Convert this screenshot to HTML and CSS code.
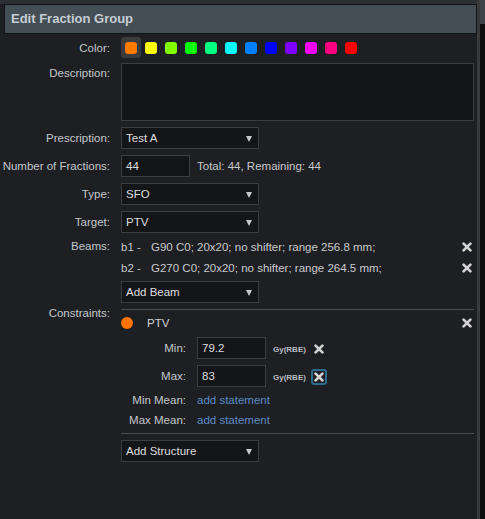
FILE: index.html
```html
<!DOCTYPE html>
<html>
<head>
<meta charset="utf-8">
<link rel="stylesheet" href="styles.css">
</head>
<body>
<div class="page">
  <div class="main">
    <div class="header">Edit Fraction Group</div>
    <div class="form">
      <div class="row row-color">
        <div class="lbl">Color:</div>
        <div class="ctl swatches">
          <span class="sw sel"><i style="background:#ff7b00"></i></span>
          <span class="sw"><i style="background:#ffff00"></i></span>
          <span class="sw"><i style="background:#80ff00"></i></span>
          <span class="sw"><i style="background:#00ff00"></i></span>
          <span class="sw"><i style="background:#00ff80"></i></span>
          <span class="sw"><i style="background:#00ffff"></i></span>
          <span class="sw"><i style="background:#0080ff"></i></span>
          <span class="sw"><i style="background:#0000ff"></i></span>
          <span class="sw"><i style="background:#8000ff"></i></span>
          <span class="sw"><i style="background:#ff00ff"></i></span>
          <span class="sw"><i style="background:#ff0080"></i></span>
          <span class="sw"><i style="background:#ff0000"></i></span>
        </div>
      </div>
      <div class="row row-desc">
        <div class="lbl lbl-top">Description:</div>
        <div class="ctl"><textarea class="desc"></textarea></div>
      </div>
      <div class="row">
        <div class="lbl">Prescription:</div>
        <div class="ctl"><div class="select">Test A<span class="arrow"></span></div></div>
      </div>
      <div class="row">
        <div class="lbl">Number of Fractions:</div>
        <div class="ctl inline"><div class="input">44</div><span class="total">Total: 44, Remaining: 44</span></div>
      </div>
      <div class="row">
        <div class="lbl">Type:</div>
        <div class="ctl"><div class="select">SFO<span class="arrow"></span></div></div>
      </div>
      <div class="row">
        <div class="lbl">Target:</div>
        <div class="ctl"><div class="select">PTV<span class="arrow"></span></div></div>
      </div>
      <div class="row row-beams">
        <div class="lbl lbl-beam">Beams:</div>
        <div class="ctl">
          <div class="beam"><span class="bid">b1 -</span><span class="btxt">G90 C0; 20x20; no shifter; range 256.8 mm;</span>
            <svg class="x" viewBox="0 0 10 10"><path d="M1.6 1.6L8.4 8.4M8.4 1.6L1.6 8.4"/></svg></div>
          <div class="beam"><span class="bid">b2 -</span><span class="btxt">G270 C0; 20x20; no shifter; range 264.5 mm;</span>
            <svg class="x" viewBox="0 0 10 10"><path d="M1.6 1.6L8.4 8.4M8.4 1.6L1.6 8.4"/></svg></div>
          <div class="select add-beam">Add Beam<span class="arrow"></span></div>
        </div>
      </div>
      <div class="row row-cons">
        <div class="lbl lbl-cons">Constraints:</div>
        <div class="ctl cons-ctl">
          <div class="cons-block">
            <div class="ptv">
              <span class="dot"></span><span class="ptv-name">PTV</span>
              <svg class="x x-right" viewBox="0 0 10 10"><path d="M1.6 1.6L8.4 8.4M8.4 1.6L1.6 8.4"/></svg>
            </div>
            <div class="crow">
              <div class="slbl">Min:</div>
              <div class="input small">79.2</div>
              <span class="unit">Gy(RBE)</span>
              <span class="xbox"><svg class="x" viewBox="0 0 10 10"><path d="M1.6 1.6L8.4 8.4M8.4 1.6L1.6 8.4"/></svg></span>
            </div>
            <div class="crow crow-max">
              <div class="slbl">Max:</div>
              <div class="input small">83</div>
              <span class="unit">Gy(RBE)</span>
              <span class="xbox focus"><svg class="x" viewBox="0 0 10 10"><path d="M1.6 1.6L8.4 8.4M8.4 1.6L1.6 8.4"/></svg></span>
            </div>
            <div class="mrow">
              <div class="slbl">Min Mean:</div>
              <span class="link">add statement</span>
            </div>
            <div class="mrow">
              <div class="slbl">Max Mean:</div>
              <span class="link">add statement</span>
            </div>
          </div>
          <div class="cons-end">
            <div class="select">Add Structure<span class="arrow"></span></div>
          </div>
        </div>
      </div>
    </div>
  </div>
  <div class="rail"></div>
  <div class="scroll"><div class="thumb"></div></div>
</div>
</body>
</html>
```
FILE: styles.css
```css
html, body {
  margin: 0;
  padding: 0;
  background: #1e1f22;
}
body {
  font-family: "Liberation Sans", Arial, sans-serif;
  font-size: 11.5px;
  color: #c3c7cb;
}
.page {
  display: flex;
  height: 519px;
  overflow: hidden;
}
.main {
  width: 477px;
  flex: none;
  border-top: 4px solid #2b3035;
  box-sizing: border-box;
}
.header {
  margin-left: 4px;
  height: 30px;
  box-sizing: border-box;
  border: 1px solid #111316;
  background: #444f55;
  color: #c6cdd2;
  font-weight: bold;
  font-size: 13px;
  line-height: 28px;
  padding-left: 6px;
}
.form {
  padding: 3px 3px 0 0;
}
.row {
  display: flex;
  align-items: center;
  margin-top: 6px;
}
.row-color {
  margin-top: 0;
  height: 21px;
}
.lbl {
  width: 110px;
  flex: none;
  text-align: right;
  margin-right: 11px;
  line-height: 14px;
}
.ctl {
  flex: 1;
  min-width: 0;
}
.swatches {
  display: flex;
}
.sw {
  width: 20px;
  height: 21px;
  display: flex;
  align-items: center;
  justify-content: center;
  border-radius: 3px;
}
.sw.sel {
  background: #3a3b3d;
}
.sw i {
  display: block;
  width: 12px;
  height: 12px;
  border-radius: 3px;
}
.row-desc {
  align-items: flex-start;
  margin-top: 5px;
}
.lbl-top {
  margin-top: 3px;
}
.desc {
  display: block;
  width: 100%;
  height: 58px;
  box-sizing: border-box;
  margin: 0;
  resize: none;
  background: #141517;
  border: 1px solid #3b3d40;
  outline: none;
}
.select, .input {
  position: relative;
  height: 22px;
  box-sizing: border-box;
  background: #141517;
  border: 1px solid #3b3d40;
  color: #dedede;
  display: flex;
  align-items: center;
  padding-left: 4px;
}
.select {
  width: 138px;
}
.arrow {
  position: absolute;
  right: 6px;
  top: 8px;
  width: 0;
  height: 0;
  border-left: 3.5px solid transparent;
  border-right: 3.5px solid transparent;
  border-top: 6px solid #c8c8c8;
}
.input {
  width: 69px;
}
.inline {
  display: flex;
  align-items: center;
}
.total {
  margin-left: 7px;
  color: #c8cacc;
}
.row-beams {
  align-items: flex-start;
  margin-top: 3px;
}
.lbl-beam {
  line-height: 21px;
}
.beam {
  display: flex;
  align-items: center;
  height: 21px;
  color: #c8cacc;
}
.bid {
  width: 30px;
  flex: none;
}
.btxt {
  flex: 1;
}
.x {
  width: 10px;
  height: 10px;
  flex: none;
  display: block;
}
.x path {
  stroke: #d2d2d2;
  stroke-width: 2.7;
  stroke-linecap: round;
  fill: none;
}
.beam .x {
  margin-right: 2px;
}
.add-beam {
  margin-top: 3px;
}
.row-cons {
  align-items: flex-start;
  margin-top: 3px;
}
.lbl-cons {
  line-height: 15px;
}
.cons-ctl {
  padding-top: 3px;
}
.cons-block {
  border-top: 1px solid #4a4c50;
  border-bottom: 1px solid #4a4c50;
  padding-bottom: 3px;
}
.ptv {
  display: flex;
  align-items: center;
  height: 20px;
  margin-top: 3px;
}
.dot {
  width: 12px;
  height: 12px;
  border-radius: 50%;
  background: #ff7300;
  flex: none;
}
.ptv-name {
  margin-left: 14px;
  flex: 1;
  color: #d0d2d4;
}
.x-right {
  margin-right: 2px;
}
.crow {
  display: flex;
  align-items: center;
  margin-top: 4px;
}
.crow-max {
  margin-top: 6px;
}
.slbl {
  width: 65px;
  flex: none;
  text-align: right;
  margin-right: 11px;
}
.unit {
  width: 38px;
  flex: none;
  margin-left: 7px;
  font-size: 8px;
  font-weight: bold;
  color: #b8bcc0;
  padding-top: 2px;
}
.xbox {
  width: 16px;
  height: 16px;
  box-sizing: border-box;
  display: flex;
  align-items: center;
  justify-content: center;
  border-radius: 3px;
  margin-top: 2px;
}
.xbox.focus {
  border: 2px solid #2b6a8a;
}
.mrow {
  display: flex;
  align-items: center;
  height: 20px;
}
.crow-max + .mrow {
  margin-top: 3px;
}
.link {
  color: #5b8ac4;
}
.cons-end {
  padding-top: 6px;
}
.rail {
  width: 3px;
  flex: none;
  background: #3a3a3c;
}
.scroll {
  width: 5px;
  flex: none;
  background: #0f0f10;
}
.thumb {
  height: 24px;
  background: #3f4448;
}
```
